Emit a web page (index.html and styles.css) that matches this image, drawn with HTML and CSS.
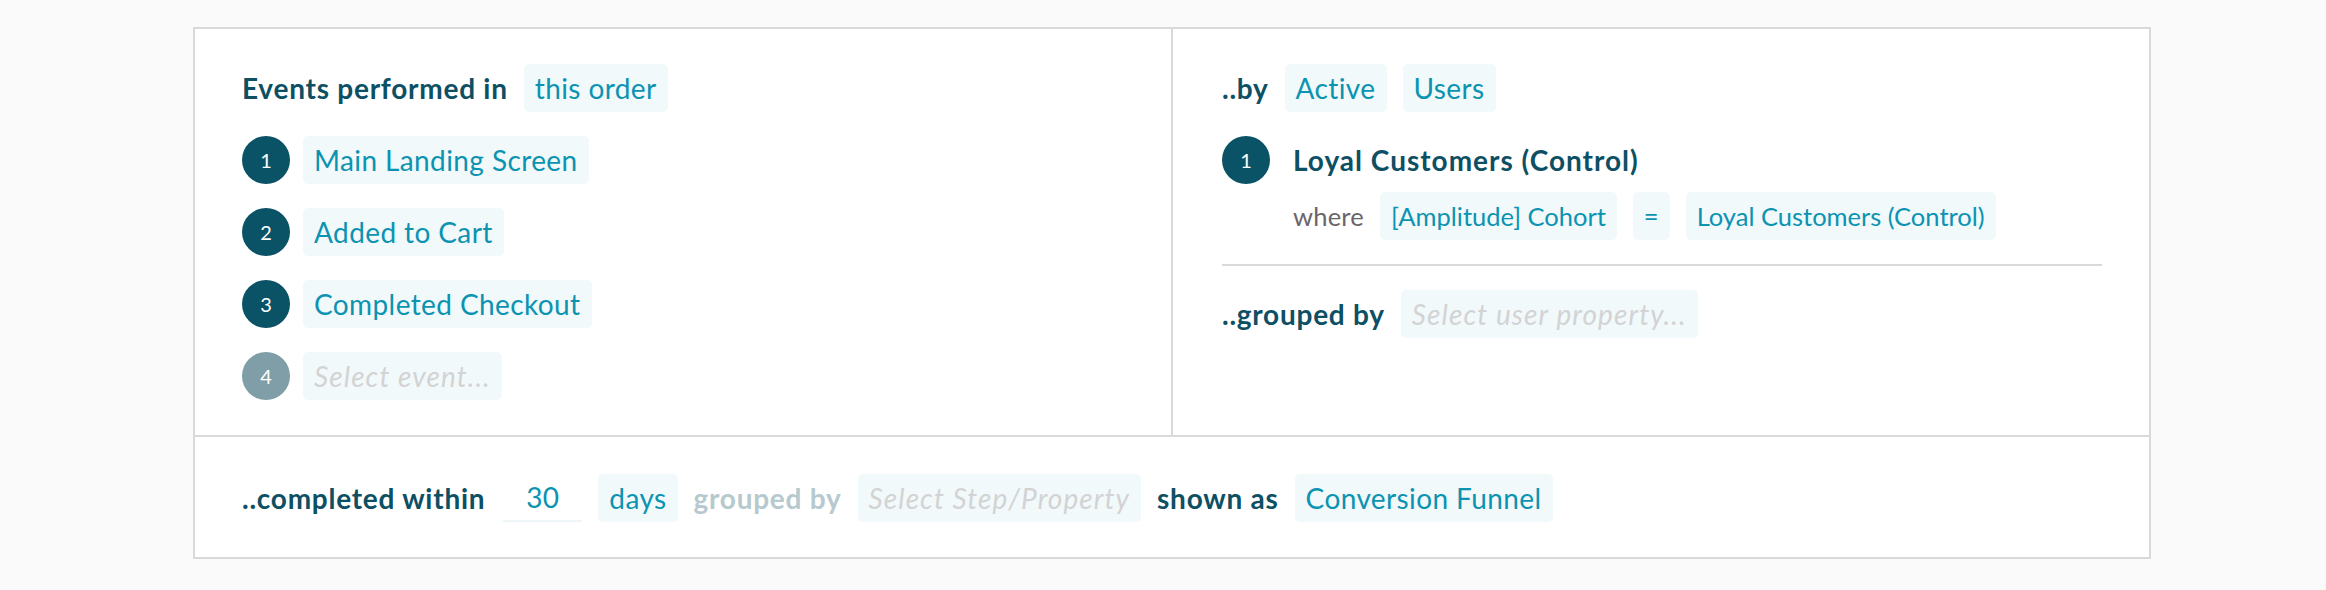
FILE: index.html
```html
<!DOCTYPE html>
<html lang="en">
<head>
<meta charset="utf-8">
<title>Funnel query</title>
<link rel="stylesheet" href="styles.css">
</head>
<body>
<div class="card">
  <div class="top">
    <div class="panel panel-left">
      <div class="row">
        <span class="label">Events performed in</span>
        <span class="chip">this order</span>
      </div>
      <div class="row">
        <span class="num">1</span>
        <span class="chip">Main Landing Screen</span>
      </div>
      <div class="row">
        <span class="num">2</span>
        <span class="chip">Added to Cart</span>
      </div>
      <div class="row">
        <span class="num">3</span>
        <span class="chip">Completed Checkout</span>
      </div>
      <div class="row">
        <span class="num num-muted">4</span>
        <span class="chip chip-placeholder">Select event...</span>
      </div>
    </div>
    <div class="panel panel-right">
      <div class="row">
        <span class="label">..by</span>
        <span class="chip">Active</span>
        <span class="chip">Users</span>
      </div>
      <div class="row row-segment">
        <span class="num">1</span>
        <span class="label segment-title">Loyal Customers (Control)</span>
      </div>
      <div class="row row-where">
        <span class="where">where</span>
        <span class="chip">[Amplitude] Cohort</span>
        <span class="chip">=</span>
        <span class="chip">Loyal Customers (Control)</span>
      </div>
      <div class="separator"></div>
      <div class="row">
        <span class="label">..grouped by</span>
        <span class="chip chip-placeholder">Select user property...</span>
      </div>
    </div>
  </div>
  <div class="bottom">
    <span class="label">..completed within</span>
    <span class="days-input">30</span>
    <span class="chip">days</span>
    <span class="label label-muted">grouped by</span>
    <span class="chip chip-placeholder">Select Step/Property</span>
    <span class="label">shown as</span>
    <span class="chip">Conversion Funnel</span>
  </div>
</div>
</body>
</html>
```

FILE: styles.css
```css
* {
  box-sizing: border-box;
}

html, body {
  margin: 0;
  padding: 0;
  background: #fafafa;
}

body {
  font-family: Lato, "Noto Sans", sans-serif;
  font-size: 28px;
  color: #0d4f63;
  padding: 27px 0 0 193px;
}

.card {
  width: 1958px;
  height: 532px;
  background: #ffffff;
  border: 2px solid #d9d9d9;
  display: flex;
  flex-direction: column;
}

.top {
  display: grid;
  grid-template-columns: 976px 1fr;
  height: 408px;
  border-bottom: 2px solid #d9d9d9;
}

.panel {
  padding-top: 35px;
  display: flex;
  flex-direction: column;
}

.panel-left {
  padding-left: 47px;
  gap: 24px;
}

.panel-right {
  padding-left: 49px;
  padding-right: 47px;
  border-left: 2px solid #d9d9d9;
}

.row {
  display: flex;
  align-items: center;
  height: 48px;
  gap: 16px;
}

.panel-right .row-segment {
  margin-top: 24px;
  gap: 23px;
}

.panel-right .row-where {
  margin-top: 8px;
  padding-left: 71px;
  gap: 16px;
  font-size: 25.5px;
}

.separator {
  height: 2px;
  background: #d9d9d9;
  margin: 24px 0;
}

.label {
  font-weight: 700;
  color: #0d4f63;
  white-space: nowrap;
  line-height: 48px;
  letter-spacing: 0.75px;
}

.segment-title {
  letter-spacing: 1px;
}

.label-muted {
  color: #b6c9ce;
}

.where {
  color: #6b6468;
  line-height: 48px;
  letter-spacing: 0.2px;
}

.chip {
  display: inline-block;
  height: 48px;
  line-height: 48px;
  padding: 0 11px;
  border-radius: 5px;
  background: #f1f9fb;
  color: #0b93b1;
  white-space: nowrap;
  letter-spacing: 0.4px;
}

.row-where .chip {
  letter-spacing: 0;
}

.chip-placeholder {
  color: #d3d3d3;
  font-style: italic;
  letter-spacing: 1.1px;
}

.num {
  flex: none;
  width: 48px;
  height: 48px;
  border-radius: 50%;
  background: #0a5265;
  color: #ffffff;
  font-size: 20px;
  display: flex;
  align-items: center;
  justify-content: center;
  margin-right: -3px;
}

.panel-right .num {
  margin-right: 0;
}

.num-muted {
  background: #7f9ea8;
}

.bottom {
  flex: 1;
  display: flex;
  align-items: center;
  gap: 16px;
  padding: 2px 47px 0;
}

.days-input {
  width: 79px;
  height: 48px;
  line-height: 46px;
  text-align: center;
  color: #0b93b1;
  border-bottom: 2px solid #eef6f8;
  margin-left: 2px;
  letter-spacing: 0.4px;
}
```
